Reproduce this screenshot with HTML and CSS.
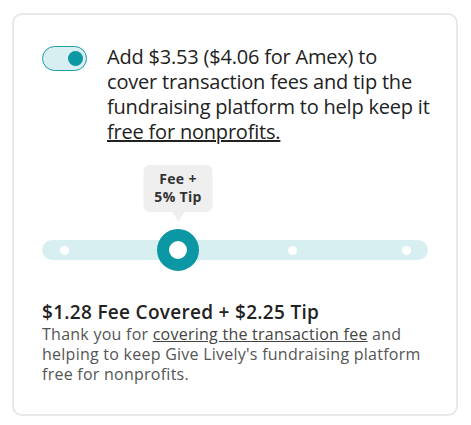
FILE: index.html
```html
<!DOCTYPE html>
<html lang="en">
<head>
<meta charset="UTF-8" />
<meta name="viewport" content="width=device-width, initial-scale=1" />
<title>Cover Fees</title>
<link rel="stylesheet" href="styles.css">
</head>
<body>

<div class="card">
  <div class="cover-row">
    <button class="toggle on" aria-label="Cover fees"><span class="knob"></span></button>
    <p class="cover-text">
      Add $3.53 ($4.06 for Amex) to<br>
      cover transaction fees and tip the fundraising platform to help keep it
      <a href="#">free for nonprofits.</a>
    </p>
  </div>

  <div class="slider">
    <div class="track">
      <div class="stop"><span class="dot"></span></div>
      <div class="stop">
        <div class="tip-bubble">Fee +<br>5% Tip</div>
        <span class="handle"></span>
      </div>
      <div class="stop"><span class="dot"></span></div>
      <div class="stop"><span class="dot"></span></div>
    </div>
  </div>

  <div class="summary">
    <h2>$1.28 Fee Covered + $2.25 Tip</h2>
    <p>Thank you for <a href="#">covering the transaction fee</a> and helping to keep Give Lively's fundraising platform free for nonprofits.</p>
  </div>
</div>

</body>
</html>
```

FILE: styles.css
```css
body {
  margin: 13px 13px 0 12px;
  font-family: "Open Sans", sans-serif;
  color: #222;
  background: #fff;
}
.card {
  border: 2px solid #e8e8e8;
  border-radius: 10px;
  padding: 29px 28px 30px 28px;
}
.cover-row {
  display: flex;
  gap: 20px;
  align-items: flex-start;
  margin-right: -6px;
}
.toggle {
  flex: none;
  width: 45px;
  height: 25px;
  margin-top: 2px;
  padding: 0 3px;
  border: 1.5px solid #1a9eaa;
  border-radius: 13px;
  background: #d8eff1;
  display: flex;
  align-items: center;
  justify-content: flex-end;
  box-sizing: border-box;
  cursor: pointer;
}
.toggle .knob {
  width: 15px;
  height: 15px;
  border-radius: 50%;
  background: #0b97a4;
}
.cover-text {
  margin: 0;
  font-size: 20px;
  letter-spacing: -0.2px;
  line-height: 25px;
  color: #222;
}
.cover-text a {
  color: #222;
}
.slider {
  margin-top: 96px;
}
.track {
  height: 20px;
  border-radius: 10px;
  background: #d8eff1;
  display: flex;
  align-items: center;
  padding: 0 22px;
  justify-content: space-between;
}
.stop {
  width: 0;
  display: flex;
  justify-content: center;
  position: relative;
}
.dot {
  flex: none;
  width: 9px;
  height: 9px;
  border-radius: 50%;
  background: #fff;
}
.handle {
  flex: none;
  width: 42px;
  height: 42px;
  border-radius: 50%;
  border: 12px solid #0b97a4;
  background: #fff;
  box-sizing: border-box;
}
.tip-bubble {
  position: absolute;
  bottom: 59px;
  left: 50%;
  transform: translateX(-50%);
  width: 69px;
  padding: 5px 0 6px;
  background: #efefef;
  border-radius: 6px;
  text-align: center;
  font-size: 14px;
  font-weight: 700;
  letter-spacing: 0.3px;
  line-height: 18px;
  color: #333;
}
.tip-bubble::after {
  content: "";
  position: absolute;
  top: 100%;
  left: 50%;
  margin-left: -6px;
  border: 6px solid transparent;
  border-top: 10px solid #efefef;
}
.summary {
  margin-top: 40px;
}
.summary h2 {
  margin: 0;
  font-size: 19px;
  font-weight: 600;
  letter-spacing: 0.3px;
  line-height: 24px;
  color: #222;
}
.summary p {
  margin: 0;
  font-size: 16px;
  letter-spacing: 0.25px;
  line-height: 20px;
  color: #555;
}
.summary a {
  color: #444;
}
```
